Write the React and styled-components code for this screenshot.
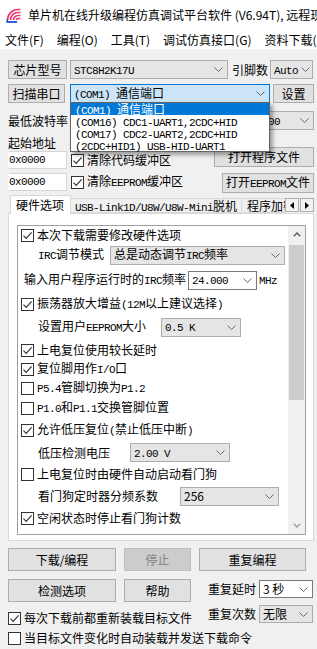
import React from 'react';
import styled, { createGlobalStyle } from 'styled-components';

const CJK = `"Noto Sans CJK SC", "Noto Sans", sans-serif`;

const GlobalStyle = createGlobalStyle`
  html, body { margin: 0; padding: 0; background: #f0f0f0; }
  body { font-family: ${CJK}; font-size: 12px; color: #000; }
  * { box-sizing: border-box; }
`;

const Window = styled.div`
  width: 317px;
  height: 649px;
  overflow: hidden;
  background: #f0f0f0;
  display: flex;
  flex-direction: column;
`;

const TitleBar = styled.div`
  height: 30px;
  flex-shrink: 0;
  background: #fff;
  display: flex;
  align-items: center;
  padding-left: 5px;
  gap: 7px;
  overflow: hidden;
`;

const IconSlot = styled.span`
  width: 16px;
  height: 16px;
  flex-shrink: 0;
  display: flex;
`;

const TitleText = styled.div`
  font-size: 12px;
  line-height: 30px;
  white-space: nowrap;
  flex-shrink: 0;
`;

const MenuBar = styled.div`
  height: 19px;
  flex-shrink: 0;
  background: #fff;
  display: flex;
  align-items: center;
  padding-left: 5px;
  gap: 13px;
  white-space: nowrap;
  overflow: hidden;
`;

const MenuItem = styled.span`
  font-size: 12px;
  line-height: 19px;
  flex-shrink: 0;
`;

const Main = styled.div`
  padding: 0 3px 0 8px;
  display: flex;
  flex-direction: column;
`;

const Row = styled.div`
  display: flex;
  align-items: center;
  height: ${(p) => p.$h || 19}px;
  margin-top: ${(p) => p.$mt || 0}px;
  padding-left: ${(p) => p.$pl || 0}px;
  gap: ${(p) => p.$gap || 0}px;
  flex-shrink: 0;
`;

const Lat = styled.span`
  font-family: "Liberation Mono", monospace;
  font-size: 11px;
  letter-spacing: -0.6px;
`;

function T({ children }) {
  const s = String(children);
  const parts = s.split(/([\x20-\x7e]+)/).filter(Boolean);
  return parts.map((p, i) =>
    /^[\x20-\x7e]+$/.test(p) ? <Lat key={i}>{p}</Lat> : <React.Fragment key={i}>{p}</React.Fragment>
  );
}

const Btn = styled.button`
  width: ${(p) => p.$w}px;
  height: ${(p) => p.$h || 19}px;
  margin-left: ${(p) => p.$ml || 0}px;
  flex-shrink: 0;
  padding: 0;
  background: ${(p) => (p.disabled ? '#cccccc' : '#e1e1e1')};
  border: 1px solid ${(p) => (p.disabled ? '#bfbfbf' : '#adadad')};
  color: ${(p) => (p.disabled ? '#838383' : '#000')};
  font-family: ${CJK};
  font-size: 12px;
  line-height: 1;
  white-space: nowrap;
`;

const Label = styled.span`
  width: ${(p) => (p.$w ? `${p.$w}px` : 'auto')};
  margin-left: ${(p) => p.$ml || 0}px;
  flex-shrink: 0;
  font-size: 12px;
  line-height: ${(p) => p.$h || 16}px;
  white-space: nowrap;
`;

const comboBg = (p) => (p.$focus ? '#cce4f7' : p.$edit ? '#fff' : '#e5e5e5');
const comboBorder = (p) => (p.$focus ? '#0078d7' : p.$edit ? '#7a7a7a' : '#adadad');

const ComboBox = styled.div`
  position: relative;
  width: ${(p) => p.$w}px;
  height: ${(p) => p.$h || 19}px;
  margin-left: ${(p) => p.$ml || 0}px;
  flex-shrink: 0;
  background: ${comboBg};
  border: 1px solid ${comboBorder};
  display: flex;
  align-items: center;
  padding-left: 3px;
  font-size: 12px;
  white-space: nowrap;
`;

const ComboText = styled.span`
  flex: 1;
  min-width: 0;
  overflow: visible;
  line-height: 16px;
`;

const ChevronBox = styled.span`
  width: ${(p) => p.$w || 18}px;
  height: 100%;
  display: flex;
  align-items: center;
  justify-content: center;
  flex-shrink: 0;
`;

const Chevron = ({ w }) => (
  <ChevronBox $w={w}>
    <svg width="9" height="5" viewBox="0 0 9 5">
      <path d="M0.5 0.5 L4.5 4.5 L8.5 0.5" fill="none" stroke="#6a6a6a" strokeWidth="1" />
    </svg>
  </ChevronBox>
);

const Combo = ({ children, chevronW, ...rest }) => (
  <ComboBox {...rest}>
    <ComboText>{children}</ComboText>
    <Chevron w={chevronW} />
  </ComboBox>
);

const DropList = styled.div`
  position: absolute;
  left: -1px;
  top: 100%;
  width: 200px;
  background: #fff;
  border: 1px solid #646464;
  box-shadow: 3px 3px 4px rgba(0, 0, 0, 0.35);
  z-index: 10;
`;

const DropItem = styled.div`
  height: 12px;
  line-height: 12px;
  padding-left: 4px;
  font-size: 12px;
  white-space: nowrap;
  background: ${(p) => (p.$sel ? '#0078d7' : '#fff')};
  color: ${(p) => (p.$sel ? '#fff' : '#000')};
`;

const TextInput = styled.div`
  width: 59px;
  height: 18px;
  flex-shrink: 0;
  background: #fff;
  border: 1px solid #d6d6d6;
  border-left-color: #fff;
  padding-left: 0;
  display: flex;
  align-items: center;
  font-size: 12px;
`;

const CheckWrap = styled.span`
  display: flex;
  align-items: center;
  gap: 3px;
  margin-left: ${(p) => p.$ml || 0}px;
  white-space: nowrap;
  font-size: 12px;
  line-height: 16px;
`;

const BoxEl = styled.span`
  width: 13px;
  height: 13px;
  flex-shrink: 0;
  border: 1px solid #333;
  background: #fff;
  display: flex;
  align-items: center;
  justify-content: center;
`;

const Check = ({ checked, children, ml }) => (
  <CheckWrap $ml={ml}>
    <BoxEl>
      {checked && (
        <svg width="11" height="11" viewBox="0 0 11 11">
          <path d="M1.5 5.6 L4.2 8.3 L9.6 2.4" fill="none" stroke="#333" strokeWidth="1.2" />
        </svg>
      )}
    </BoxEl>
    <span>
      <T>{children}</T>
    </span>
  </CheckWrap>
);

const AddrBlock = styled.div`
  display: flex;
  justify-content: space-between;
  margin-top: 5px;
`;

const AddrLeft = styled.div`
  display: flex;
  flex-direction: column;
`;

const AddrRight = styled.div`
  display: flex;
  flex-direction: column;
  align-items: flex-end;
  padding-top: 12px;
  gap: 6px;
`;

const TabStrip = styled.div`
  display: flex;
  height: 19px;
  margin-top: 2px;
  margin-bottom: -1px;
  position: relative;
  z-index: 1;
`;

const TabsViewport = styled.div`
  flex: 1;
  display: flex;
  align-items: flex-start;
  overflow: hidden;
  padding-left: 2px;
`;

const Tab = styled.div`
  flex-shrink: 0;
  width: ${(p) => p.$w}px;
  height: ${(p) => (p.$active ? 19 : 15)}px;
  margin-top: ${(p) => (p.$active ? 0 : 3)}px;
  background: ${(p) => (p.$active ? '#fff' : '#f0f0f0')};
  border: 1px solid #d9d9d9;
  border-bottom: ${(p) => (p.$active ? 'none' : '1px solid #d9d9d9')};
  border-left: ${(p) => (p.$first || p.$active ? '1px solid #d9d9d9' : 'none')};
  padding-left: ${(p) => p.$pl || 5}px;
  font-size: 12px;
  line-height: ${(p) => (p.$active ? 17 : 14)}px;
  white-space: nowrap;
  overflow: hidden;
`;

const TabArrows = styled.div`
  display: flex;
  margin-top: 3px;
  height: 14px;
`;

const ArrowBtn = styled.div`
  width: 14px;
  height: 14px;
  background: #f3f3f3;
  border: 1px solid #adadad;
  margin-left: ${(p) => p.$ml || 0}px;
  display: flex;
  align-items: center;
  justify-content: center;
`;

const Panel = styled.div`
  width: 306px;
  background: #fff;
  border: 1px solid #d9d9d9;
  padding: 11px 7px 5px 8px;
`;

const InnerBox = styled.div`
  display: flex;
  border: 1px solid #a0a0a0;
  background: #fff;
  height: 310px;
`;

const InnerContent = styled.div`
  flex: 1;
  display: flex;
  flex-direction: column;
  padding-left: 3px;
  overflow: hidden;
`;

const ScrollBar = styled.div`
  width: 17px;
  background: #f0f0f0;
  display: flex;
  flex-direction: column;
`;

const ScrollArrow = styled.div`
  height: 17px;
  display: flex;
  align-items: center;
  justify-content: center;
  flex-shrink: 0;
`;

const ScrollTrack = styled.div`
  flex: 1;
  padding: 2px 1px 0 1px;
`;

const Thumb = styled.div`
  height: 155px;
  background: #cdcdcd;
`;

const BottomRow = styled.div`
  display: flex;
  gap: 8px;
  margin-top: ${(p) => p.$mt || 0}px;
`;

const BottomBlock = styled.div`
  display: flex;
`;

const BottomLeft = styled.div`
  display: flex;
  flex-direction: column;
`;

const BottomRight = styled.div`
  display: flex;
  flex-direction: column;
  margin-left: 16px;
  padding-top: 9px;
  gap: 7px;
`;

const AppIcon = () => (
  <IconSlot>
    <svg width="16" height="16" viewBox="0 0 16 16">
      <path d="M2.5 13 A10.5 10.5 0 0 1 13 2.5 L15.5 2.5" fill="none" stroke="#ee3a72" strokeWidth="1.7" />
      <path d="M5.5 13 A7.5 7.5 0 0 1 13 5.5 L15.5 5.5" fill="none" stroke="#ee3a72" strokeWidth="1.7" />
      <path d="M8.5 13 A4.5 4.5 0 0 1 13 8.5 L15.5 8.5" fill="none" stroke="#ee3a72" strokeWidth="1.7" />
      <path d="M11.5 13 A1.5 1.5 0 0 1 13 11.5 L15.5 11.5" fill="none" stroke="#ee3a72" strokeWidth="1.7" />
      <path d="M1.5 15 L12 15" stroke="#1d4fcf" strokeWidth="1.8" />
      <path d="M2.3 15 L2.3 12" stroke="#1d4fcf" strokeWidth="1.5" />
    </svg>
  </IconSlot>
);

const menus = ['文件(F)', '编程(O)', '工具(T)', '调试仿真接口(G)', '资料下载(D)'];

const ports = [
  '(COM1) 通信端口',
  '(COM16) CDC1-UART1,2CDC+HID',
  '(COM17) CDC2-UART2,2CDC+HID',
  '(2CDC+HID1) USB-HID-UART1',
];

export default function App() {
  return (
    <>
      <GlobalStyle />
      <Window>
        <TitleBar>
          <AppIcon />
          <TitleText>单片机在线升级编程仿真调试平台软件 (V6.94T), 远程现场升级</TitleText>
        </TitleBar>
        <MenuBar>
          {menus.map((m) => (
            <MenuItem key={m}>{m}</MenuItem>
          ))}
        </MenuBar>
        <Main>
          <Row $mt={11}>
            <Btn $w={59}>芯片型号</Btn>
            <Combo $w={158} $ml={3}>
              <T>STC8H2K17U</T>
            </Combo>
            <Label $w={36} $ml={4}>引脚数</Label>
            <Combo $w={43} $ml={2} chevronW={14}>
              <T>Auto</T>
            </Combo>
          </Row>
          <Row $mt={5}>
            <Btn $w={57}>扫描串口</Btn>
            <ComboBox $w={200} $ml={5} $focus>
              <ComboText>
                <T>{ports[0]}</T>
              </ComboText>
              <Chevron />
              <DropList>
                {ports.map((p, i) => (
                  <DropItem key={p} $sel={i === 0}>
                    <T>{p}</T>
                  </DropItem>
                ))}
              </DropList>
            </ComboBox>
            <Btn $w={41} $ml={3}>设置</Btn>
          </Row>
          <Row $mt={8}>
            <Label $w={62}>最低波特率</Label>
            <Combo $w={104}>
              <T>2400</T>
            </Combo>
            <Label $w={60} $ml={6}>最高波特率</Label>
            <Combo $w={74} $ml={0}>
              <T>115200</T>
            </Combo>
          </Row>
          <AddrBlock>
            <AddrLeft>
              <Label $h={16}>起始地址</Label>
              <Row $h={18}>
                <TextInput>
                  <T>0x0000</T>
                </TextInput>
                <Check checked ml={4}>清除代码缓冲区</Check>
              </Row>
              <Row $h={18} $mt={4}>
                <TextInput>
                  <T>0x0000</T>
                </TextInput>
                <Check checked ml={4}>清除EEPROM缓冲区</Check>
              </Row>
            </AddrLeft>
            <AddrRight>
              <Btn $w={100} $h={20}>打开程序文件</Btn>
              <Btn $w={92} $h={20}>
                <T>打开EEPROM文件</T>
              </Btn>
            </AddrRight>
          </AddrBlock>
          <TabStrip>
            <TabsViewport>
              <Tab $active $w={61} $pl={5}>硬件选项</Tab>
              <Tab $w={171} $pl={4}>
                <T>USB-Link1D/U8W/U8W-Mini脱机</T>
              </Tab>
              <Tab $w={60} $pl={5}>程序加密后传输</Tab>
            </TabsViewport>
            <TabArrows>
              <ArrowBtn>
                <svg width="4" height="7" viewBox="0 0 4 7">
                  <path d="M4 0 L0 3.5 L4 7 Z" fill="#000" />
                </svg>
              </ArrowBtn>
              <ArrowBtn $ml={1}>
                <svg width="4" height="7" viewBox="0 0 4 7">
                  <path d="M0 0 L4 3.5 L0 7 Z" fill="#000" />
                </svg>
              </ArrowBtn>
            </TabArrows>
          </TabStrip>
          <Panel>
            <InnerBox>
              <InnerContent>
                <Row $h={18}>
                  <Check checked>本次下载需要修改硬件选项</Check>
                </Row>
                <Row $h={22} $pl={17}>
                  <Label $w={72}>
                    <T>IRC调节模式</T>
                  </Label>
                  <Combo $w={175}>
                    <T>总是动态调节IRC频率</T>
                  </Combo>
                </Row>
                <Row $h={28} $pl={3}>
                  <Label $w={164}>
                    <T>输入用户程序运行时的IRC频率</T>
                  </Label>
                  <Combo $w={69} $edit>
                    <T>24.000</T>
                  </Combo>
                  <Label $ml={2}>
                    <T>MHz</T>
                  </Label>
                </Row>
                <Row $h={20}>
                  <Check checked>振荡器放大增益(12M以上建议选择)</Check>
                </Row>
                <Row $h={26} $pl={17}>
                  <Label $w={123}>
                    <T>设置用户EEPROM大小</T>
                  </Label>
                  <Combo $w={80}>
                    <T>0.5 K</T>
                  </Combo>
                </Row>
                <Row $h={20}>
                  <Check checked>上电复位使用较长延时</Check>
                </Row>
                <Row $h={18}>
                  <Check checked>复位脚用作I/O口</Check>
                </Row>
                <Row $h={20}>
                  <Check>P5.4管脚切换为P1.2</Check>
                </Row>
                <Row $h={20}>
                  <Check>P1.0和P1.1交换管脚位置</Check>
                </Row>
                <Row $h={24}>
                  <Check checked>允许低压复位(禁止低压中断)</Check>
                </Row>
                <Row $h={21} $pl={17}>
                  <Label $w={92}>低压检测电压</Label>
                  <Combo $w={100}>
                    <T>2.00 V</T>
                  </Combo>
                </Row>
                <Row $h={22}>
                  <Check>上电复位时由硬件自动启动看门狗</Check>
                </Row>
                <Row $h={22} $pl={17}>
                  <Label $w={142}>看门狗定时器分频系数</Label>
                  <Combo $w={99}>256</Combo>
                </Row>
                <Row $h={22}>
                  <Check checked>空闲状态时停止看门狗计数</Check>
                </Row>
              </InnerContent>
              <ScrollBar>
                <ScrollArrow>
                  <svg width="8" height="5" viewBox="0 0 8 5">
                    <path d="M0.8 4.2 L4 1 L7.2 4.2" fill="none" stroke="#606060" strokeWidth="1.5" />
                  </svg>
                </ScrollArrow>
                <ScrollTrack>
                  <Thumb />
                </ScrollTrack>
                <ScrollArrow>
                  <svg width="8" height="5" viewBox="0 0 8 5">
                    <path d="M0.8 0.8 L4 4 L7.2 0.8" fill="none" stroke="#a0a0a0" strokeWidth="1.5" />
                  </svg>
                </ScrollArrow>
              </ScrollBar>
            </InnerBox>
          </Panel>
          <BottomRow $mt={7}>
            <Btn $w={108} $h={23}>下载/编程</Btn>
            <Btn $w={67} $h={23} disabled>停止</Btn>
            <Btn $w={107} $h={23}>重复编程</Btn>
          </BottomRow>
          <BottomBlock>
            <BottomLeft>
              <BottomRow $mt={8}>
                <Btn $w={108} $h={23}>检测选项</Btn>
                <Btn $w={67} $h={23}>帮助</Btn>
              </BottomRow>
              <Row $h={18} $mt={7}>
                <Check checked>每次下载前都重新装载目标文件</Check>
              </Row>
            </BottomLeft>
            <BottomRight>
              <Row $h={18}>
                <Label $w={51}>重复延时</Label>
                <Combo $w={54} $h={18} $edit>
                  3 秒
                </Combo>
              </Row>
              <Row $h={18}>
                <Label $w={51}>重复次数</Label>
                <Combo $w={54} $h={18}>
                  无限
                </Combo>
              </Row>
            </BottomRight>
          </BottomBlock>
          <Row $h={20} $mt={1}>
            <Check>当目标文件变化时自动装载并发送下载命令</Check>
          </Row>
        </Main>
      </Window>
    </>
  );
}
